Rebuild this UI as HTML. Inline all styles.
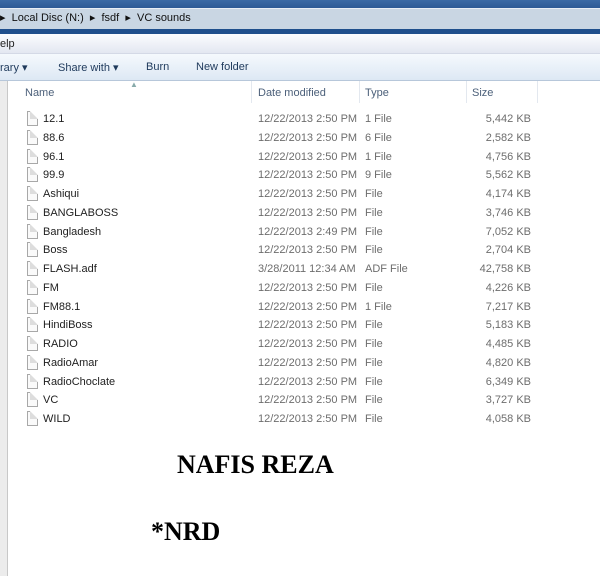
<!DOCTYPE html>
<html><head><style>
body{margin:0;width:600px;height:576px;overflow:hidden;background:#fff;font-family:"Liberation Sans",sans-serif;font-size:11px;color:#1e1e1e;position:relative}
.a{position:absolute}
.row{position:absolute;left:0;width:600px;height:18px}
.row span{position:absolute;top:2px}
.ic{position:absolute;left:27px;top:0;width:9px;height:13px;border:1px solid #a8a8a8;background:#fafafa}
.ic:after{content:"";position:absolute;right:-1px;top:-1px;border-left:4px solid #ddd;border-bottom:4px solid #ddd;border-top:4px solid #fff;border-right:4px solid #fff;width:0;height:0}
.g{color:#6d6d6d}
.tb{position:absolute;top:61px;color:#1e395b;white-space:pre}
</style></head><body>
<div class="a" style="left:0;top:0;width:600px;height:8px;background:linear-gradient(#3b6aa5,#2d5a95)"></div>
<div class="a" style="left:0;top:8px;width:600px;height:20px;background:#c9d6e3;border-top:1px solid #e8eef4;border-bottom:1px solid #8fa6bf"></div>
<div class="a" style="left:0;top:11px;font-size:11px;color:#111;white-space:pre">▸  Local Disc (N:)  ▸  fsdf  ▸  VC sounds</div>
<div class="a" style="left:0;top:29px;width:600px;height:5px;background:#1f4f8c"></div>
<div class="a" style="left:0;top:34px;width:600px;height:19px;background:linear-gradient(#fbfcfe,#e3e7f1);border-bottom:1px solid #d4d9e6"></div>
<div class="a" style="left:0;top:38px;color:#222">elp</div>
<div class="a" style="left:0;top:54px;width:600px;height:26px;background:linear-gradient(#f5f9fd,#dde8f4);border-bottom:1px solid #b7c7da"></div>
<div class="tb" style="left:0">rary ▾</div>
<div class="tb" style="left:58px">Share with ▾</div>
<div class="tb" style="left:146px">Burn</div>
<div class="tb" style="left:196px">New folder</div>
<div class="a" style="left:0;top:81px;width:7px;height:495px;background:#ececec;border-right:1px solid #c8c8c8"></div>
<div class="a" style="left:251px;top:81px;width:1px;height:22px;background:#e3e8ef"></div>
<div class="a" style="left:359px;top:81px;width:1px;height:22px;background:#e3e8ef"></div>
<div class="a" style="left:466px;top:81px;width:1px;height:22px;background:#e3e8ef"></div>
<div class="a" style="left:537px;top:81px;width:1px;height:22px;background:#e3e8ef"></div>
<div class="a" style="left:130px;top:80px;font-size:8px;color:#8aa">▲</div>
<div class="a g" style="left:25px;top:87px;color:#4c607a">Name</div>
<div class="a" style="left:258px;top:87px;color:#4c607a">Date modified</div>
<div class="a" style="left:365px;top:87px;color:#4c607a">Type</div>
<div class="a" style="left:472px;top:87px;color:#4c607a">Size</div>
<div id="rows"></div>
<script>
var d=[["12.1","12/22/2013 2:50 PM","1 File","5,442 KB"],["88.6","12/22/2013 2:50 PM","6 File","2,582 KB"],["96.1","12/22/2013 2:50 PM","1 File","4,756 KB"],["99.9","12/22/2013 2:50 PM","9 File","5,562 KB"],["Ashiqui","12/22/2013 2:50 PM","File","4,174 KB"],["BANGLABOSS","12/22/2013 2:50 PM","File","3,746 KB"],["Bangladesh","12/22/2013 2:49 PM","File","7,052 KB"],["Boss","12/22/2013 2:50 PM","File","2,704 KB"],["FLASH.adf","3/28/2011 12:34 AM","ADF File","42,758 KB"],["FM","12/22/2013 2:50 PM","File","4,226 KB"],["FM88.1","12/22/2013 2:50 PM","1 File","7,217 KB"],["HindiBoss","12/22/2013 2:50 PM","File","5,183 KB"],["RADIO","12/22/2013 2:50 PM","File","4,485 KB"],["RadioAmar","12/22/2013 2:50 PM","File","4,820 KB"],["RadioChoclate","12/22/2013 2:50 PM","File","6,349 KB"],["VC","12/22/2013 2:50 PM","File","3,727 KB"],["WILD","12/22/2013 2:50 PM","File","4,058 KB"]];
var h="";d.forEach(function(r,i){h+='<div class="row" style="top:'+(111+i*18.75)+'px"><div class="ic"></div><span style="left:43px">'+r[0]+'</span><span class="g" style="left:258px">'+r[1]+'</span><span class="g" style="left:365px">'+r[2]+'</span><span class="g" style="right:69px">'+r[3]+'</span></div>'});
document.getElementById("rows").innerHTML=h;
</script>
<div class="a" style="left:177px;top:450px;font:bold 26px 'Liberation Serif',serif;color:#000">NAFIS REZA</div>
<div class="a" style="left:151px;top:517px;font:bold 26px 'Liberation Serif',serif;color:#000">*NRD</div>
</body></html>
